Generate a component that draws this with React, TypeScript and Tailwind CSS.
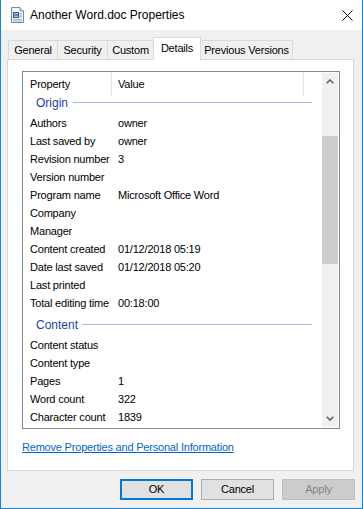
import React from "react";

const origin: [string, string][] = [
  ["Authors", "owner"],
  ["Last saved by", "owner"],
  ["Revision number", "3"],
  ["Version number", ""],
  ["Program name", "Microsoft Office Word"],
  ["Company", ""],
  ["Manager", ""],
  ["Content created", "01/12/2018 05:19"],
  ["Date last saved", "01/12/2018 05:20"],
  ["Last printed", ""],
  ["Total editing time", "00:18:00"],
];

const content: [string, string][] = [
  ["Content status", ""],
  ["Content type", ""],
  ["Pages", "1"],
  ["Word count", "322"],
  ["Character count", "1839"],
];

function Row({ k, v }: { k: string; v: string }) {
  return (
    <div className="flex h-[18px] leading-[18px] shrink-0 whitespace-nowrap">
      <div className="w-[89px] pl-[7px] shrink-0">{k}</div>
      <div className="pl-[6px]">{v}</div>
    </div>
  );
}

function Tab({ label, w, selected, extra }: { label: string; w: string; selected?: boolean; extra?: string }) {
  return (
    <div
      className={
        selected
          ? `${w} h-[23px] -mb-px relative z-10 bg-white border-l border-r border-t border-[#d9d9d9] flex items-center justify-center pb-[2px]`
          : `${w} h-[19px] bg-[#f0f0f0] border-t border-[#d9d9d9] flex items-center justify-center ${extra ?? ""}`
      }
    >
      {label}
    </div>
  );
}

export default function App() {
  return (
    <div className="w-[363px] h-[509px] flex flex-col border-x border-b border-[#1883d7] bg-[#f0f0f0] font-[family-name:'Liberation_Sans',Arial,sans-serif] text-black text-[11px] tracking-[-0.2px] overflow-hidden">
      {/* Title bar */}
      <div className="h-[30px] shrink-0 bg-white flex items-center pl-[10px]">
        <svg width="13" height="16" viewBox="0 0 13 16">
          <path d="M0.5 0.5H9L12.5 4V15.5H0.5Z" fill="#f4f7fb" stroke="#7d8a99" />
          <path d="M9 0.5V4H12.5" fill="#dfe6ef" stroke="#7d8a99" />
          <rect x="2" y="5" width="6" height="6" fill="#2f5b9c" />
          <path d="M3 6.5h4M3 8h4M3 9.5h4" stroke="#c9d8ee" strokeWidth="0.8" />
          <path d="M8.5 6.5h2.5M8.5 8h2.5M8.5 9.5h2.5M2 12.5h9M2 14h9" stroke="#8fa3bd" strokeWidth="0.8" />
        </svg>
        <span className="ml-[6px] text-[12px] tracking-normal">Another Word.doc Properties</span>
        <svg className="ml-auto mr-[9px]" width="11" height="11" viewBox="0 0 11 11">
          <path d="M0.5 0.5L10.5 10.5M10.5 0.5L0.5 10.5" stroke="#000" strokeWidth="1" />
        </svg>
      </div>

      {/* Body */}
      <div className="flex-1 flex flex-col pt-[7px]">
        <div className="flex items-end h-[22px] ml-[7px] shrink-0">
          <Tab label="General" w="w-[49px]" extra="border-l" />
          <Tab label="Security" w="w-[50px]" extra="border-l" />
          <Tab label="Custom" w="w-[46px]" extra="border-l" />
          <Tab label="Details" w="w-[48px]" selected />
          <Tab label="Previous Versions" w="w-[92px]" extra="border-r" />
        </div>

        <div className="ml-[6px] w-[347px] h-[412px] shrink-0 bg-white border border-[#d9d9d9] flex flex-col">
          <div className="ml-[14px] mt-[11px] w-[318px] h-[358px] shrink-0 border border-[#828790] flex overflow-hidden">
            <div className="flex-1 flex flex-col overflow-hidden">
              {/* header */}
              <div className="flex h-[25px] shrink-0 items-center">
                <div className="w-[88px] pl-[7px] shrink-0">Property</div>
                <div className="w-px h-[23px] bg-[#e5e5e5]" />
                <div className="w-[191px] pl-[6px] shrink-0">Value</div>
                <div className="w-px h-[23px] bg-[#e5e5e5]" />
              </div>
              {/* Origin group */}
              <div className="flex items-start h-[17px] shrink-0 pl-[13px] pr-[10px]">
                <span className="text-[12px] leading-[12px] tracking-normal text-[#1e3fa8]">Origin</span>
                <div className="flex-1 h-px mt-[5px] ml-[5px] bg-[#a4bce6]" />
              </div>
              {origin.map(([k, v]) => (
                <Row key={k} k={k} v={v} />
              ))}
              {/* Content group */}
              <div className="flex items-start h-[24px] shrink-0 pt-[7px] pl-[13px] pr-[10px]">
                <span className="text-[12px] leading-[12px] tracking-normal text-[#1e3fa8]">Content</span>
                <div className="flex-1 h-px mt-[5px] ml-[4px] bg-[#a4bce6]" />
              </div>
              {content.map(([k, v]) => (
                <Row key={k} k={k} v={v} />
              ))}
            </div>
            {/* scrollbar */}
            <div className="w-[16px] shrink-0 my-px mr-px bg-[#f0f0f0] flex flex-col">
              <div className="h-[17px] shrink-0 flex items-center justify-center">
                <svg width="8" height="5" viewBox="0 0 8 5">
                  <path d="M0.7 4.3L4 1L7.3 4.3" fill="none" stroke="#606060" strokeWidth="1.6" />
                </svg>
              </div>
              <div className="flex-1 flex flex-col">
                <div className="mt-[46px] h-[128px] bg-[#cdcdcd]" />
              </div>
              <div className="h-[17px] shrink-0 flex items-center justify-center">
                <svg width="8" height="5" viewBox="0 0 8 5">
                  <path d="M0.7 0.7L4 4L7.3 0.7" fill="none" stroke="#606060" strokeWidth="1.6" />
                </svg>
              </div>
            </div>
          </div>
          <div className="ml-[14px] mt-[11px] leading-[15px]">
            <span className="text-[#0066cc] underline underline-offset-[1px]">Remove Properties and Personal Information</span>
          </div>
        </div>

        <div className="flex justify-end gap-[8px] mt-[8px] mr-[7px] shrink-0">
          <div className="w-[73px] h-[21px] border-2 border-[#0078d7] bg-[#e1e1e1] flex items-center justify-center">OK</div>
          <div className="w-[73px] h-[21px] border border-[#adadad] bg-[#e1e1e1] flex items-center justify-center">Cancel</div>
          <div className="w-[73px] h-[21px] border border-[#bfbfbf] bg-[#cccccc] text-[#838383] flex items-center justify-center">Apply</div>
        </div>
      </div>
    </div>
  );
}
